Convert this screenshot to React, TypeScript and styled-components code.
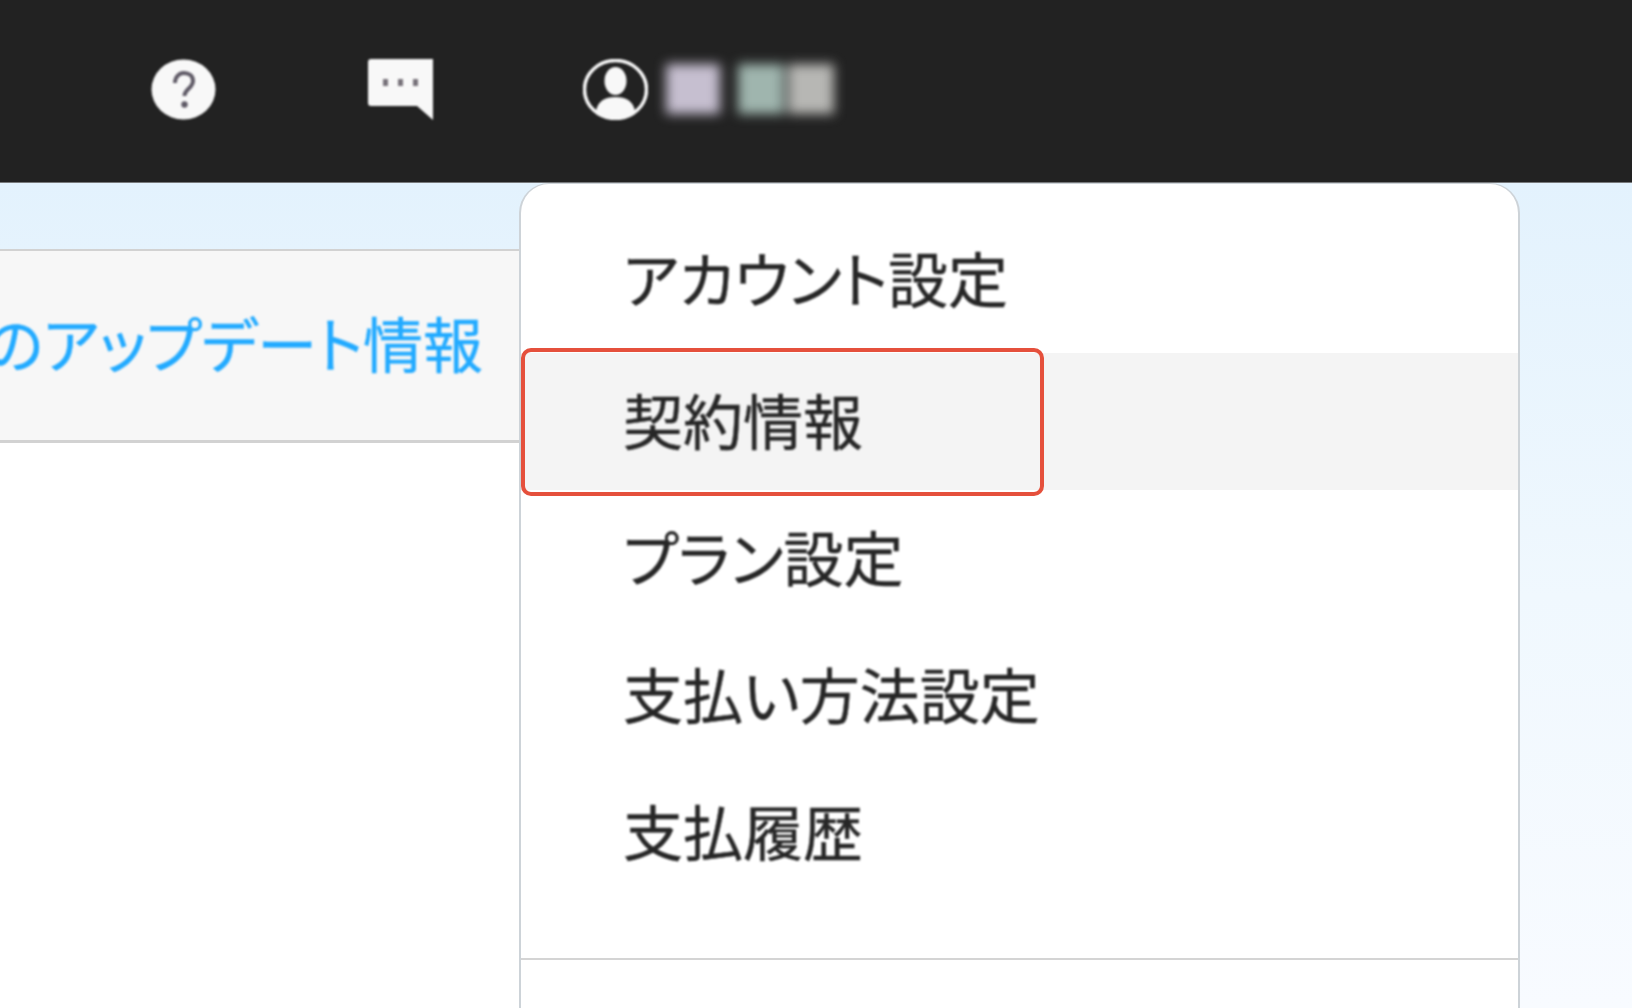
import styled, { createGlobalStyle } from 'styled-components'

const GlobalStyle = createGlobalStyle`
  html, body {
    margin: 0;
    padding: 0;
    height: 100%;
    overflow: hidden;
    background: #ffffff;
  }
  #root {
    height: 100%;
  }
`

const Page = styled.div`
  display: flex;
  flex-direction: column;
  height: 1008px;
  font-family: "Noto Sans CJK JP", "Noto Sans", sans-serif;
`

const Header = styled.header`
  display: flex;
  align-items: center;
  flex: 0 0 183px;
  box-sizing: border-box;
  padding: 0 0 4px 151px;
  background: #222222;
  border-bottom: 1px solid #77797b;
`

const IconButton = styled.div<{ $gap: number }>`
  display: flex;
  width: 65px;
  height: 61px;
  margin-right: ${({ $gap }) => $gap}px;
  filter: blur(0.8px);

  svg {
    width: 100%;
    height: 100%;
  }
`

const UserName = styled.div`
  display: flex;
  align-items: center;
  gap: 4px;
  margin-left: -130px;
  filter: blur(6px);
`

const NameBlob = styled.span<{ $width: number; $color: string; $gap?: number }>`
  display: block;
  width: ${({ $width }) => $width}px;
  height: 50px;
  margin-right: ${({ $gap }) => $gap ?? 0}px;
  background: ${({ $color }) => $color};
`

const Main = styled.main`
  display: flex;
  flex: 1;
  min-height: 0;
  background: linear-gradient(180deg, #e3f2fd 0%, #f0f8fe 50%, #f8fbff 100%);
`

const LeftColumn = styled.div`
  display: flex;
  flex-direction: column;
  flex: 0 0 519px;
  min-width: 0;
  padding-top: 66px;
  overflow: hidden;
`

const NewsBand = styled.div`
  display: flex;
  align-items: center;
  justify-content: flex-end;
  flex: 0 0 194px;
  box-sizing: border-box;
  padding: 0 36px 8px 0;
  overflow: hidden;
  background: #f7f7f7;
  border-top: 2px solid #d2d2d2;
  border-bottom: 3px solid #d2d2d2;
`

const NewsLink = styled.span`
  flex-shrink: 0;
  font-size: 60px;
  line-height: 1;
  color: #22aaff;
  white-space: nowrap;
  font-feature-settings: "palt";
  -webkit-text-stroke: 0.4px #22aaff;
  filter: blur(0.9px);
`

const LeftBlank = styled.div`
  flex: 1;
  background: #ffffff;
`

const Menu = styled.nav`
  position: relative;
  display: flex;
  flex-direction: column;
  flex: 0 0 1001px;
  box-sizing: border-box;
  padding-top: 25px;
  background: #ffffff;
  border: 2px solid #cdd3d8;
  border-bottom: none;
  border-top-width: 1px;
  border-radius: 30px 30px 0 0;
`

const MenuItem = styled.div<{ $active?: boolean }>`
  display: flex;
  align-items: center;
  height: 137px;
  box-sizing: border-box;
  padding: 0 0 6px 102px;
  background: ${({ $active }) => ($active ? '#f4f4f4' : 'transparent')};

  &:first-child {
    height: 144px;
    padding-bottom: 8px;
  }
`

const ItemLabel = styled.span`
  font-size: 60px;
  line-height: 1;
  color: #262626;
  white-space: nowrap;
  font-feature-settings: "palt";
  -webkit-text-stroke: 0.4px #262626;
  filter: blur(0.9px);
`

const Divider = styled.div`
  height: 2px;
  margin-top: 57px;
  background: #d4d4d4;
`

// annotation drawn over the menu
const Highlight = styled.div`
  position: absolute;
  left: 0;
  top: 164px;
  width: 523px;
  height: 148px;
  box-sizing: border-box;
  border: 4px solid #e5503c;
  border-radius: 10px;
`

const items = ['アカウント設定', '契約情報', 'プラン設定', '支払い方法設定', '支払履歴']

const App = () => {
  return (
    <Page>
      <GlobalStyle />
      <Header>
        <IconButton $gap={152}>
          <svg viewBox="0 0 65 61">
            <ellipse cx="32.5" cy="30.5" rx="32" ry="30" fill="#f8f8f8" />
            <path
              d="M24 24c0-6 4-10 9-10s9 3 9 8c0 7-8.500 8-8.500 15"
              fill="none"
              stroke="#5f5a66"
              strokeWidth="4"
            />
            <circle cx="33.500" cy="45.500" r="3.200" fill="#5f5a66" />
          </svg>
        </IconButton>
        <IconButton $gap={150}>
          <svg viewBox="0 0 65 61">
            <path
              d="M3 0h62v61L49 47H3a3 3 0 0 1-3-3V3a3 3 0 0 1 3-3z"
              fill="#f8f8f8"
            />
            <rect x="15" y="20" width="5" height="7" fill="#77727a" />
            <rect x="30" y="20" width="5" height="7" fill="#77727a" />
            <rect x="45" y="20" width="5" height="7" fill="#77727a" />
          </svg>
        </IconButton>
        <IconButton $gap={148}>
          <svg viewBox="0 0 65 61">
            <ellipse cx="32.5" cy="30.5" rx="31" ry="29" fill="none" stroke="#f8f8f8" strokeWidth="3.500" />
            <ellipse cx="32.500" cy="22" rx="11" ry="14" fill="#f8f8f8" />
            <path d="M13 52c2-10 9-14 19.500-14S50 42 52 52c-5 5-12 8-19.500 8S18 57 13 52z" fill="#f8f8f8" />
          </svg>
        </IconButton>
        <UserName>
          <NameBlob $width={54} $color="#c6bfd0" $gap={14} />
          <NameBlob $width={46} $color="#9fb5ae" />
          <NameBlob $width={46} $color="#b7b7b4" />
        </UserName>
      </Header>
      <Main>
        <LeftColumn>
          <NewsBand>
            <NewsLink>のアップデート情報</NewsLink>
          </NewsBand>
          <LeftBlank />
        </LeftColumn>
        <Menu>
          {items.map((label, index) => (
            <MenuItem key={label} $active={index === 1}>
              <ItemLabel>{label}</ItemLabel>
            </MenuItem>
          ))}
          <Divider />
          <Highlight />
        </Menu>
      </Main>
    </Page>
  )
}

export default App
